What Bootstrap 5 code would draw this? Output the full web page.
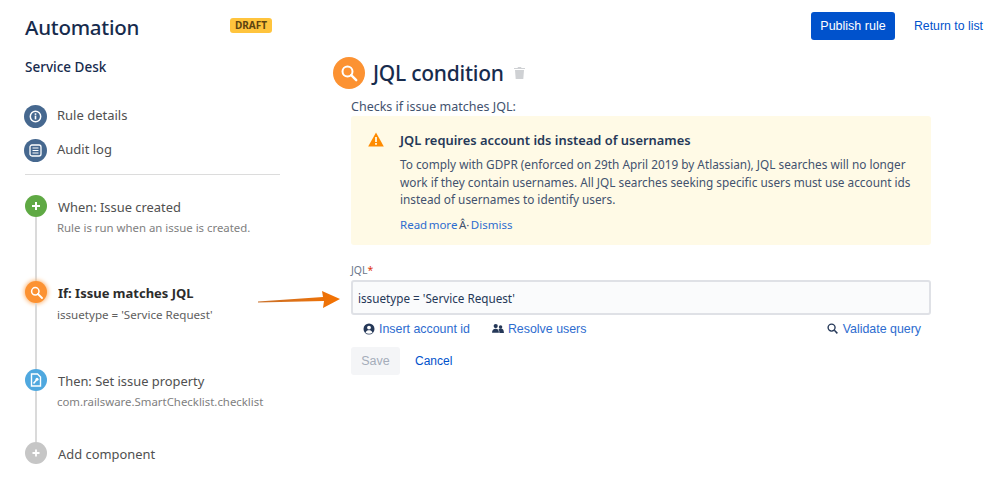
<!doctype html>
<html lang="en">
<head>
<meta charset="utf-8">
<title>Automation</title>
<link href="https://cdn.jsdelivr.net/npm/bootstrap@5.3.0/dist/css/bootstrap.min.css" rel="stylesheet">
<style>
html,body{height:496px;overflow:hidden;background:#fff}
body{font-family:"Noto Sans","Open Sans",sans-serif;color:#172b4d;position:relative}
.arial{font-family:"Liberation Sans",Arial,sans-serif}
.shell{height:496px}
.side{width:255px;margin-left:25px;flex:none;padding-top:13px}
.brand-row{height:28px}
.brand{font-size:20.5px;line-height:28px;font-weight:500;color:#172b4d;margin:0;letter-spacing:-.25px}
.draft{background:#ffc43d;color:#5c4310;font-size:10px;font-weight:700;line-height:15px;padding:0 5px;border-radius:3px;margin-right:8px;margin-top:-3px}
.proj{font-size:13.5px;font-weight:500;line-height:20px;margin-top:16px;margin-bottom:22px}
.nav-item-x{height:34px;margin-left:-1px;color:#505050;font-size:13px}
.disc{width:23px;height:23px;border-radius:50%;flex:none;color:#fff}
.disc-nav{background:#46688f;margin-right:10px}
.sep{height:1px;background:#dcdcdc;margin:7px 0 20px;opacity:1;border:0}
.step{color:#505050}
.rail{width:22px;flex:none;margin-right:11px}
.rail-line{width:2px;flex-grow:1;background:#dadada}
.disc-s{width:22px;height:22px}
.s1{height:86px}.s2{height:88px}.s3{height:73px}
.g{background:#5fa944}.o{background:#fc9232;box-shadow:0 0 4px 1px #fcb878}.b{background:#4fa8df}.n{background:#c6c6c6}
.st-t{font-size:12.9px;line-height:22px;color:#505050;padding-top:1px}
.st-b{font-weight:700;color:#2c2c2c;font-size:13px}
.st-s{font-size:11.4px;line-height:20px;color:#808080;margin-left:-1px}
.st-d{color:#606060;font-size:11.6px;padding-top:1px}
.main{flex-grow:1;margin-left:53px;padding-right:16px}
.topbar{padding-top:12px;height:57px}
.pub{background:#0052cc;border:0;color:#fff;font-size:12.5px;line-height:28px;height:28px;padding:0;border-radius:3px;width:84px;white-space:nowrap;font-weight:500}
.pub:hover{background:#0052cc;color:#fff}
.ret{color:#0052cc;font-size:12.3px;line-height:28px;text-decoration:none;margin-left:19px}
.hd-ic{width:32px;height:32px;background:#fc9232;margin-right:8px}
.hd{font-size:21px;font-weight:500;margin:0;line-height:32px;color:#172b4d;letter-spacing:-.25px}
.trash{margin-left:10px}
.body-x{margin-left:18px;width:580px}
.checks{font-size:12.5px;line-height:18px;margin-top:9px;color:#42526e}
.warn{background:#fffae6;height:129px;border-radius:3px;padding:14px 16px 0 17px;font-size:11.8px;color:#42526e;margin-top:0}
.warn-ic{width:32px;flex:none}
.warn-t{font-size:12.9px;font-weight:600;line-height:20px;color:#253858;margin-bottom:6px}
.warn-p{line-height:17.6px;margin:0 0 7px}
.lnk{color:#2d6ccf;text-decoration:none}
.warn-l{font-size:11.5px;word-spacing:-1.5px}
.amp{color:#42526e}
.fl{font-size:10.5px;line-height:14px;margin-top:18px;margin-bottom:3px;color:#6b778c}
.fl span{color:#de350b}
.inp{height:35px;background:#fafbfc;border:2px solid #dfe1e6;border-radius:3px;font-size:11.7px;color:#253858;padding:2px 5px 0;display:flex;align-items:center}
.acts{padding:0 10px 0 12px;height:28px;margin-bottom:4px;font-size:12.4px}
.act{color:#2d6ccf;text-decoration:none;display:inline-flex;align-items:center;gap:4px}
.grp{gap:22px}
.val{gap:5px}
.save{background:#f4f5f7;border:0;color:#a5adba;font-size:12.5px;width:49px;height:28px;padding:0;border-radius:3px}
.save:disabled{background:#f4f5f7;color:#a5adba;opacity:1}
.cancel{color:#0052cc;font-size:12px;text-decoration:none;margin-left:15px}
.arrow{position:absolute;left:258px;top:289px}
</style>
</head>
<body>
<div class="d-flex shell">
  <aside class="side">
    <div class="d-flex justify-content-between align-items-center brand-row">
      <h1 class="brand">Automation</h1>
      <span class="draft">DRAFT</span>
    </div>
    <div class="proj">Service Desk</div>
    <div class="d-flex align-items-center nav-item-x">
      <span class="disc disc-nav d-flex align-items-center justify-content-center">
        <svg width="13" height="13" viewBox="0 0 13 13"><circle cx="6.500" cy="6.500" r="5.200" fill="none" stroke="#fff" stroke-width="1.500"/><rect x="5.700" y="5.600" width="1.600" height="3.800" fill="#fff"/><rect x="5.700" y="3.300" width="1.600" height="1.600" fill="#fff"/></svg>
      </span>Rule details
    </div>
    <div class="d-flex align-items-center nav-item-x">
      <span class="disc disc-nav d-flex align-items-center justify-content-center">
        <svg width="13" height="13" viewBox="0 0 13 13"><rect x="1" y="1" width="11" height="11" rx="2" fill="none" stroke="#fff" stroke-width="1.300"/><path d="M3.500 4h6M3.500 6.500h6M3.500 9h6" stroke="#fff" stroke-width="1"/></svg>
      </span>Audit log
    </div>
    <hr class="sep">
    <div class="d-flex step s1">
      <div class="rail d-flex flex-column align-items-center">
        <span class="disc disc-s g d-flex align-items-center justify-content-center"><svg width="10" height="10" viewBox="0 0 10 10"><path d="M5 1v8M1 5h8" stroke="#fff" stroke-width="2"/></svg></span>
        <span class="rail-line"></span>
      </div>
      <div><div class="st-t">When: Issue created</div><div class="st-s">Rule is run when an issue is created.</div></div>
    </div>
    <div class="d-flex step s2">
      <div class="rail d-flex flex-column align-items-center">
        <span class="disc disc-s o d-flex align-items-center justify-content-center"><svg width="13" height="13" viewBox="0 0 13 13"><circle cx="5.300" cy="5.300" r="3.700" fill="none" stroke="#fff" stroke-width="1.500"/><path d="M8 8l4 4" stroke="#fff" stroke-width="1.800" stroke-linecap="round"/></svg></span>
        <span class="rail-line"></span>
      </div>
      <div><div class="st-t st-b">If: Issue matches JQL</div><div class="st-s st-d">issuetype = 'Service Request'</div></div>
    </div>
    <div class="d-flex step s3">
      <div class="rail d-flex flex-column align-items-center">
        <span class="disc disc-s b d-flex align-items-center justify-content-center"><svg width="12" height="14" viewBox="0 0 12 14"><path d="M1.500 1h6l3 3v9h-9z" fill="none" stroke="#fff" stroke-width="1.400"/><path d="M3.500 10.500l3-3.500" stroke="#fff" stroke-width="1.600"/><circle cx="7" cy="6.300" r="1.500" fill="#fff"/></svg></span>
        <span class="rail-line"></span>
      </div>
      <div><div class="st-t">Then: Set issue property</div><div class="st-s">com.railsware.SmartChecklist.checklist</div></div>
    </div>
    <div class="d-flex step">
      <div class="rail d-flex flex-column align-items-center">
        <span class="disc disc-s n d-flex align-items-center justify-content-center"><svg width="10" height="10" viewBox="0 0 10 10"><path d="M5 1.500v7M1.500 5h7" stroke="#fff" stroke-width="1.800"/></svg></span>
      </div>
      <div class="st-t">Add component</div>
    </div>
  </aside>
  <main class="main">
    <div class="topbar d-flex justify-content-end align-items-start arial">
      <button class="btn pub arial" type="button">Publish rule</button>
      <a href="#" class="ret">Return to list</a>
    </div>
    <div class="d-flex align-items-center">
      <span class="disc hd-ic d-flex align-items-center justify-content-center"><svg width="18" height="18" viewBox="0 0 18 18"><circle cx="7.500" cy="7.500" r="5" fill="none" stroke="#fff" stroke-width="2"/><path d="M11.200 11.200l5 5" stroke="#fff" stroke-width="2.400" stroke-linecap="round"/></svg></span>
      <h2 class="hd">JQL condition</h2>
      <svg class="trash" width="11" height="14" viewBox="0 0 11 13"><path d="M1 3.500h9l-.7 9H1.700zM0 1.500h3.500L4 .5h3l.5 1H11v1H0z" fill="#cfd1d4"/></svg>
    </div>
    <div class="body-x">
      <div class="checks">Checks if issue matches JQL:</div>
      <div class="warn d-flex">
        <div class="warn-ic">
          <svg width="16" height="15" viewBox="0 0 16 15"><path d="M8 .5L15.800 14.500H.2z" fill="#ff8b00"/><rect x="7.100" y="5" width="1.800" height="5" fill="#fffae6"/><rect x="7.100" y="11" width="1.800" height="1.800" fill="#fffae6"/></svg>
        </div>
        <div>
          <div class="warn-t">JQL requires account ids instead of usernames</div>
          <p class="warn-p">To comply with GDPR (enforced on 29th April 2019 by Atlassian), JQL searches will no longer work if they contain usernames. All JQL searches seeking specific users must use account ids instead of usernames to identify users.</p>
          <div class="warn-l"><a href="#" class="lnk">Read more</a> <span class="amp">Â·</span> <a href="#" class="lnk">Dismiss</a></div>
        </div>
      </div>
      <label class="fl d-block">JQL<span>*</span></label>
      <div class="inp">issuetype = 'Service Request'</div>
      <div class="acts d-flex align-items-center justify-content-between arial">
        <div class="d-flex grp">
          <a href="#" class="act"><svg width="12" height="12" viewBox="0 0 12 12"><circle cx="6" cy="6" r="5.500" fill="#253858"/><circle cx="6" cy="4.600" r="1.900" fill="#fff"/><path d="M2.500 9.700c.7-1.800 2-2.400 3.500-2.400s2.800.6 3.500 2.400c-2 1.500-5 1.500-7 0z" fill="#fff"/></svg>Insert account id</a>
          <a href="#" class="act"><svg width="12" height="11" viewBox="0 0 13 12"><circle cx="4" cy="3.300" r="2.300" fill="#253858"/><circle cx="9.300" cy="4.300" r="1.900" fill="#253858"/><path d="M0 10.500c0-3 1.500-4.300 4-4.300s3.500 1.300 3.500 4.300zM8 11c0-2.500-.3-3.500-1-4.300.7-.5 1.500-.7 2.300-.7 2.200 0 3.700 1.200 3.700 5z" fill="#253858"/></svg>Resolve users</a>
        </div>
        <a href="#" class="act val"><svg width="11" height="11" viewBox="0 0 12 12"><circle cx="5" cy="5" r="3.800" fill="none" stroke="#253858" stroke-width="1.500"/><path d="M8 8l3.300 3.300" stroke="#253858" stroke-width="1.600"/></svg>Validate query</a>
      </div>
      <div class="d-flex align-items-center arial">
        <button class="btn save arial" disabled type="button">Save</button>
        <a href="#" class="cancel">Cancel</a>
      </div>
    </div>
  </main>
</div>
<svg class="arrow" width="84" height="20" viewBox="0 0 84 20"><defs><linearGradient id="ag" x1="0" x2="1"><stop offset="0" stop-color="#c9702a"/><stop offset="1" stop-color="#f57200"/></linearGradient></defs><path d="M0 12.500L65 8 64 2 82 10 65 19 66 12 0 13.500z" fill="url(#ag)"/></svg>
</body>
</html>
